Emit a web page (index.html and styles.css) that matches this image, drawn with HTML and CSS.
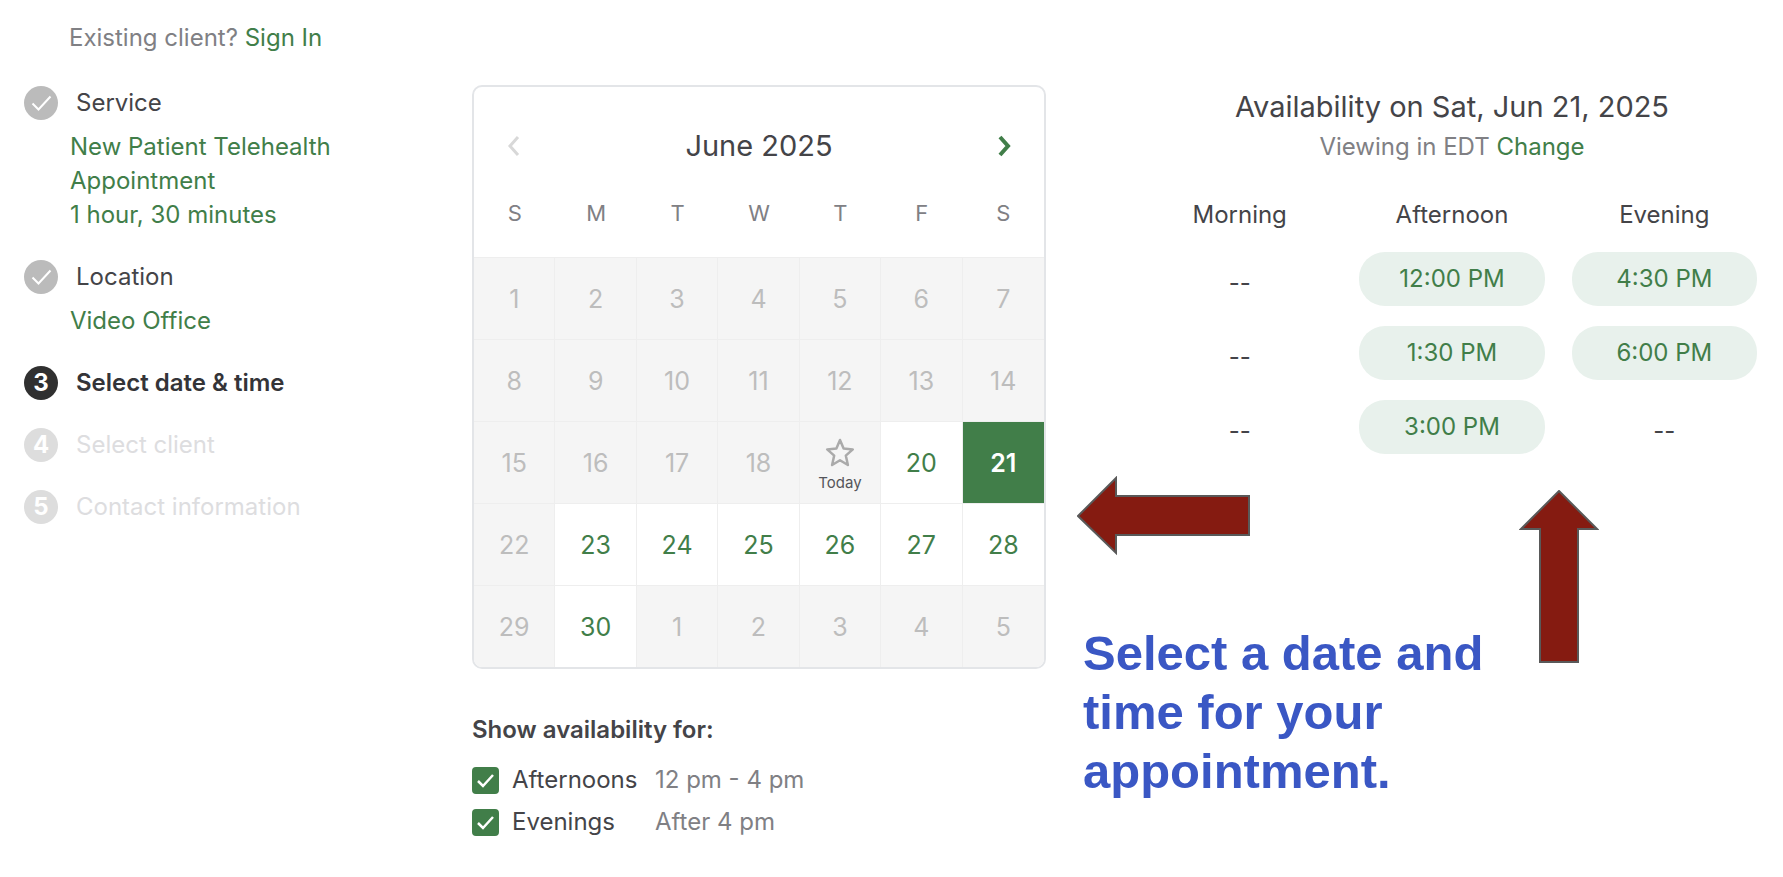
FILE: index.html
```html
<!DOCTYPE html>
<html lang="en">
<head>
    <meta charset="UTF-8">
    <meta name="viewport" content="width=device-width, initial-scale=1.0">
    <title>Book an appointment</title>
    <link rel="stylesheet" href="styles.css">
</head>
<body>
    <p class="sign-in">Existing client? <a href="#">Sign In</a></p>

    <main class="booking">
        <ol class="steps">
            <li class="step">
                <div class="step-head">
                    <svg class="step-icon" viewBox="0 0 34 34" aria-hidden="true">
                        <circle cx="17" cy="17" r="17" fill="#bbbbbb"/>
                        <path d="M8.5 17.5l6 6L26.5 10.5" fill="none" stroke="#fff" stroke-width="2"/>
                    </svg>
                    Service
                </div>
                <a class="step-value" href="#">New Patient Telehealth Appointment<br>1 hour, 30 minutes</a>
            </li>
            <li class="step">
                <div class="step-head">
                    <svg class="step-icon" viewBox="0 0 34 34" aria-hidden="true">
                        <circle cx="17" cy="17" r="17" fill="#bbbbbb"/>
                        <path d="M8.5 17.5l6 6L26.5 10.5" fill="none" stroke="#fff" stroke-width="2"/>
                    </svg>
                    Location
                </div>
                <a class="step-value" href="#">Video Office</a>
            </li>
            <li class="step current">
                <div class="step-head"><span class="step-number">3</span>Select date &amp; time</div>
            </li>
            <li class="step upcoming">
                <div class="step-head"><span class="step-number">4</span>Select client</div>
            </li>
            <li class="step upcoming">
                <div class="step-head"><span class="step-number">5</span>Contact information</div>
            </li>
        </ol>

        <section class="dates">
            <div class="calendar">
                <div class="month-nav">
                    <button class="nav-btn" aria-label="Previous month" disabled>
                        <svg width="16" height="24" viewBox="0 0 16 24"><path d="M12 3L4 12l8 9" fill="none" stroke="currentColor" stroke-width="3"/></svg>
                    </button>
                    <h2 class="month">June 2025</h2>
                    <button class="nav-btn" aria-label="Next month">
                        <svg width="16" height="24" viewBox="0 0 16 24"><path d="M4 3l8 9-8 9" fill="none" stroke="currentColor" stroke-width="4"/></svg>
                    </button>
                </div>
                <table class="month-grid">
                    <thead>
                        <tr><th>S</th><th>M</th><th>T</th><th>W</th><th>T</th><th>F</th><th>S</th></tr>
                    </thead>
                    <tbody>
                        <tr>
                            <td><button class="day" disabled>1</button></td>
                            <td><button class="day" disabled>2</button></td>
                            <td><button class="day" disabled>3</button></td>
                            <td><button class="day" disabled>4</button></td>
                            <td><button class="day" disabled>5</button></td>
                            <td><button class="day" disabled>6</button></td>
                            <td><button class="day" disabled>7</button></td>
                        </tr>
                        <tr>
                            <td><button class="day" disabled>8</button></td>
                            <td><button class="day" disabled>9</button></td>
                            <td><button class="day" disabled>10</button></td>
                            <td><button class="day" disabled>11</button></td>
                            <td><button class="day" disabled>12</button></td>
                            <td><button class="day" disabled>13</button></td>
                            <td><button class="day" disabled>14</button></td>
                        </tr>
                        <tr>
                            <td><button class="day" disabled>15</button></td>
                            <td><button class="day" disabled>16</button></td>
                            <td><button class="day" disabled>17</button></td>
                            <td><button class="day" disabled>18</button></td>
                            <td>
                                <button class="day today" disabled>
                                    <svg width="30" height="32" viewBox="0 0 30 32" aria-hidden="true"><path d="M15 3l3.6 8.6 9.2.8-7 6.2 2.1 9.4-7.9-4.800L7.100 28l2.100-9.400-7-6.200 9.200-.8z" fill="none" stroke="#aaaaaa" stroke-width="2.5" stroke-linejoin="round"/></svg>
                                    Today
                                </button>
                            </td>
                            <td><button class="day">20</button></td>
                            <td><button class="day selected" aria-pressed="true">21</button></td>
                        </tr>
                        <tr>
                            <td><button class="day" disabled>22</button></td>
                            <td><button class="day">23</button></td>
                            <td><button class="day">24</button></td>
                            <td><button class="day">25</button></td>
                            <td><button class="day">26</button></td>
                            <td><button class="day">27</button></td>
                            <td><button class="day">28</button></td>
                        </tr>
                        <tr>
                            <td><button class="day" disabled>29</button></td>
                            <td><button class="day">30</button></td>
                            <td><button class="day" disabled>1</button></td>
                            <td><button class="day" disabled>2</button></td>
                            <td><button class="day" disabled>3</button></td>
                            <td><button class="day" disabled>4</button></td>
                            <td><button class="day" disabled>5</button></td>
                        </tr>
                    </tbody>
                </table>
            </div>

            <fieldset class="filters">
                <legend>Show availability for:</legend>
                <label class="filter">
                    <input type="checkbox" checked>
                    <span class="filter-name">Afternoons</span>
                    <span class="filter-hours">12 pm - 4 pm</span>
                </label>
                <label class="filter">
                    <input type="checkbox" checked>
                    <span class="filter-name">Evenings</span>
                    <span class="filter-hours">After 4 pm</span>
                </label>
            </fieldset>
        </section>

        <section class="availability">
            <div class="times">
                <h2 class="times-title">Availability on Sat, Jun 21, 2025</h2>
                <p class="timezone">Viewing in EDT <a href="#">Change</a></p>
                <div class="slots">
                    <h3>Morning</h3>
                    <h3>Afternoon</h3>
                    <h3>Evening</h3>
                    <span class="no-slot">--</span>
                    <button class="slot">12:00 PM</button>
                    <button class="slot">4:30 PM</button>
                    <span class="no-slot">--</span>
                    <button class="slot">1:30 PM</button>
                    <button class="slot">6:00 PM</button>
                    <span class="no-slot">--</span>
                    <button class="slot">3:00 PM</button>
                    <span class="no-slot">--</span>
                </div>
            </div>

            <div class="hint">
                <div class="hint-main">
                    <svg class="arrow" width="174" height="80" viewBox="0 0 174 80" aria-hidden="true">
                        <path d="M1 40L39 2v18h133v39H39v18z"/>
                    </svg>
                    <p class="hint-text">Select a date and time for your appointment.</p>
                </div>
                <svg class="arrow arrow-up" width="80" height="174" viewBox="0 0 80 174" aria-hidden="true">
                    <path d="M40 1l38 38H59v133H21V39H2z"/>
                </svg>
            </div>
        </section>
    </main>
</body>
</html>
```

FILE: styles.css
```css
* {
    box-sizing: border-box;
}
body {
    margin: 0;
    padding: 21px 26px 32px 24px;
    background-color: #ffffff;
    color: #444448;
    font-family: Inter, "Liberation Sans", sans-serif;
    font-size: 24px;
    line-height: 34px;
}
h2, h3, p {
    margin: 0;
    font-weight: 400;
}
a {
    color: #417e49;
    text-decoration: none;
}
button {
    border: 0;
    padding: 0;
    background: none;
    color: #417e49;
    font: inherit;
    cursor: pointer;
}
.sign-in {
    padding-left: 45px;
    margin-bottom: 30px;
    color: #808084;
}
.booking {
    display: grid;
    grid-template-columns: 417fr 574fr 680fr;
    column-gap: 31px;
    align-items: start;
}

/* steps */
.steps {
    display: flex;
    flex-direction: column;
    gap: 28px;
    margin: 0;
    padding: 1px 0 0;
    list-style: none;
}
.step-head {
    display: flex;
    align-items: center;
    gap: 18px;
}
.step-icon {
    width: 34px;
    height: 34px;
}
.step-number {
    width: 34px;
    height: 34px;
    border-radius: 50%;
    background-color: #303030;
    color: #ffffff;
    font-weight: 700;
    text-align: center;
}
.step-value {
    display: block;
    padding: 10px 0 0 46px;
}
.current {
    color: #343438;
    font-weight: 600;
}
.upcoming {
    color: #dddddf;
}
.upcoming .step-number {
    background-color: #dddddd;
}

/* calendar */
.calendar {
    border: 2px solid #e3e5e8;
    border-radius: 10px;
    overflow: hidden;
}
.month-nav {
    display: flex;
    justify-content: space-between;
    align-items: center;
    padding: 42px 32px 0;
}
.month {
    font-size: 29px;
}
.nav-btn {
    display: flex;
}
.nav-btn:disabled {
    color: #d8d8d8;
}
.month-grid {
    width: 100%;
    table-layout: fixed;
    border-collapse: separate;
    border-spacing: 0;
}
.month-grid th {
    padding: 33px 0 27px;
    color: #808084;
    font-size: 22px;
    font-weight: 400;
}
.month-grid td {
    padding: 0;
    border-top: 1px solid #eeeeee;
    border-right: 1px solid #eeeeee;
}
.month-grid td:last-child {
    border-right: 0;
}
.day {
    display: block;
    width: 100%;
    height: 81px;
    font-size: 25px;
}
.day:disabled {
    background-color: #f5f5f5;
    color: #bdbdbd;
    cursor: default;
}
.day.selected {
    background-color: #417e49;
    color: #ffffff;
    font-weight: 600;
}
.day.today {
    display: flex;
    flex-direction: column;
    align-items: center;
    justify-content: center;
    gap: 2px;
    padding-top: 6px;
    color: #55555a;
    font-size: 15px;
    line-height: 24px;
}

/* filters */
.filters {
    margin: 44px 0 0;
    padding: 0;
    border: 0;
}
.filters legend {
    padding: 0 0 12px;
    font-weight: 600;
}
.filter {
    display: flex;
    align-items: center;
    height: 42px;
}
.filter input {
    appearance: none;
    width: 27px;
    height: 27px;
    margin: 0 13px 0 0;
    border: 2px solid #417e49;
    border-radius: 4px;
}
.filter input:checked {
    background: #417e49 url("data:image/svg+xml,%3Csvg xmlns='http://www.w3.org/2000/svg' viewBox='0 0 23 23'%3E%3Cpath d='M4 12l5 5L19 6' fill='none' stroke='white' stroke-width='2.5'/%3E%3C/svg%3E") center / 100% no-repeat;
}
.filter-name {
    width: 143px;
}
.filter-hours {
    color: #808084;
}

/* times */
.times {
    padding-left: 70px;
    text-align: center;
}
.times-title {
    padding-top: 1px;
    font-size: 29px;
    line-height: 42px;
}
.timezone {
    padding-top: 2px;
    color: #808084;
}
.slots {
    display: grid;
    grid-template-columns: repeat(3, 1fr);
    gap: 20px 27px;
    padding-top: 34px;
}
.slots h3 {
    font-size: 24px;
}
.slot {
    height: 54px;
    border-radius: 26px;
    background-color: #e8f1ec;
}
.no-slot {
    padding-top: 14px;
}

/* hint */
.hint {
    display: flex;
    gap: 22px;
    padding-top: 22px;
}
.hint-main {
    width: 420px;
}
.arrow {
    display: block;
    flex: none;
    fill: #851b11;
    stroke: #595959;
    stroke-width: 2px;
}
.arrow-up {
    margin-top: 14px;
}
.hint-text {
    padding: 68px 0 0 6px;
    color: #3a57c4;
    font-family: "Liberation Sans", Arial, sans-serif;
    font-size: 49px;
    font-weight: 700;
    line-height: 59px;
}
```
